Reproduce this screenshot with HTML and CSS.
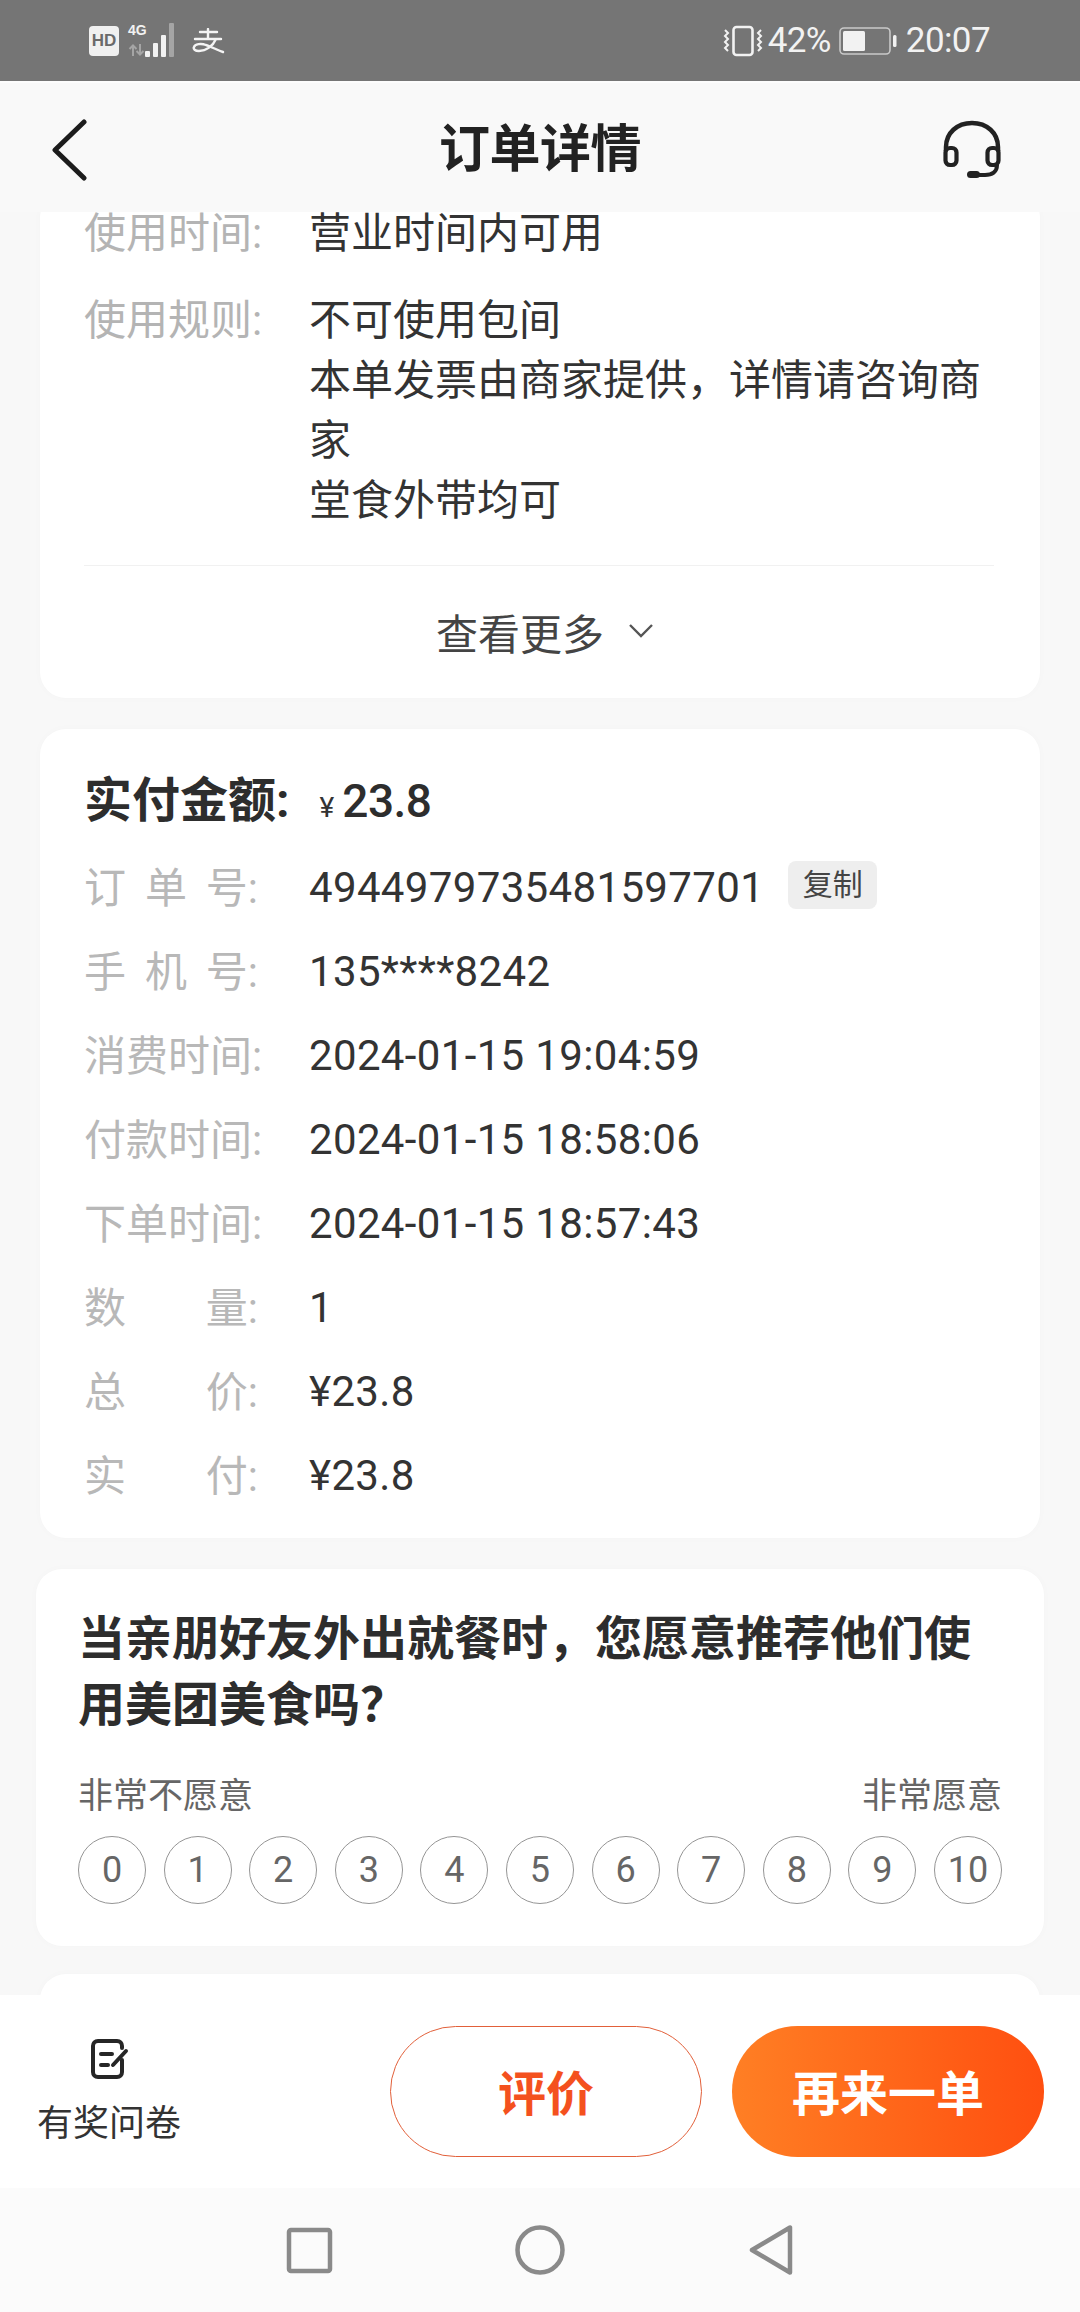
FILE: index.html
```html
<!DOCTYPE html>
<html lang="zh-CN">
<head>
<meta charset="utf-8">
<title>订单详情</title>
<link rel="stylesheet" href="styles.css">
</head>
<body>
<div class="app">
  <div class="status">
    <div class="status-left">
      <span class="hd">HD</span>
      <div class="signal">
        <span class="net">4G</span>
        <svg class="bars" width="52" height="38" viewBox="0 0 52 38">
          <path d="M5 24v10M1.500 27 5 23.500 8.500 27M12 22v10M8.500 29l3.500 3.500 3.500-3.500" fill="none" stroke="#a5a5a5" stroke-width="2"/>
          <rect x="17" y="29" width="5" height="6" rx="1" fill="#f2f2f2"/>
          <rect x="25" y="21" width="5" height="14" rx="1" fill="#f2f2f2"/>
          <rect x="33" y="13" width="5" height="22" rx="1" fill="#f2f2f2"/>
          <rect x="41" y="1" width="5" height="34" rx="1" fill="#a5a5a5"/>
        </svg>
      </div>
      <svg class="ali" width="34" height="26" viewBox="0 0 34 26">
        <path d="M9 4h17M17 1v10M4 11h26M25 11c-3 7-10 12-17 12-4 0-6-2-5-4 1-3 7-4 12-2 6 2 11 5 17 7" fill="none" stroke="#f4f4f4" stroke-width="2.400" stroke-linecap="round"/>
      </svg>
    </div>
    <div class="status-right">
      <svg width="42" height="32" viewBox="0 0 42 32">
        <rect x="11.500" y="2" width="19" height="28" rx="3" fill="none" stroke="#f2f2f2" stroke-width="2.600"/>
        <path d="M3 5l3 3-3 3 3 3-3 3 3 3-3 3 3 3M39 5l-3 3 3 3-3 3 3 3-3 3 3 3-3 3" fill="none" stroke="#f2f2f2" stroke-width="2"/>
      </svg>
      <span class="pct">42%</span>
      <svg class="batt" width="58" height="28" viewBox="0 0 58 28">
        <rect x="1" y="1" width="50" height="26" rx="4" fill="none" stroke="#c9c9c9" stroke-width="1.600"/>
        <rect x="4" y="4" width="22" height="20" rx="1.500" fill="#f2f2f2"/>
        <rect x="54" y="8" width="3.500" height="12" rx="1.500" fill="#f2f2f2"/>
      </svg>
      <span class="time">20:07</span>
    </div>
  </div>

  <header class="nav">
    <svg class="back" width="36" height="62" viewBox="0 0 36 62">
      <path d="M33 3 4 31l29 28" fill="none" stroke="#1c1c1c" stroke-width="5" stroke-linecap="round" stroke-linejoin="round"/>
    </svg>
    <h1 class="nav-title">订单详情</h1>
    <svg class="headset" width="60" height="60" viewBox="0 0 60 60">
      <path d="M4 31V27C4 13 15 3 30 3s26 10 26 24v4" fill="none" stroke="#222" stroke-width="4.500"/>
      <rect x="3.500" y="28" width="11" height="17" rx="4.500" fill="none" stroke="#222" stroke-width="4.200"/>
      <rect x="45.500" y="28" width="11" height="17" rx="4.500" fill="none" stroke="#222" stroke-width="4.200"/>
      <path d="M55 45c0 7-5 10-12 10H28" fill="none" stroke="#222" stroke-width="4"/>
      <rect x="25" y="51" width="13" height="7" rx="3.500" fill="#222"/>
    </svg>
  </header>

  <main class="scroll">
    <section class="card card-rules">
      <div class="info">
        <span class="info-label">使用时间:</span>
        <span class="info-value">营业时间内可用</span>
      </div>
      <div class="info info-last">
        <span class="info-label">使用规则:</span>
        <span class="info-value">不可使用包间<br>本单发票由商家提供，详情请咨询商家<br>堂食外带均可</span>
      </div>
      <div class="more">
        <span>查看更多</span>
        <svg width="26" height="16" viewBox="0 0 26 16"><path d="M2 2l11 11L24 2" fill="none" stroke="#555" stroke-width="2.400"/></svg>
      </div>
    </section>

    <section class="card card-pay">
      <div class="paid">
        <span class="paid-label">实付金额:</span>
        <span class="paid-yen">¥</span>
        <span class="paid-num">23.8</span>
      </div>
      <div class="row">
        <span class="label"><span>订</span><span>单</span><span>号:</span></span>
        <span class="val">4944979735481597701</span>
        <span class="copy">复制</span>
      </div>
      <div class="row">
        <span class="label"><span>手</span><span>机</span><span>号:</span></span>
        <span class="val">135****8242</span>
      </div>
      <div class="row">
        <span class="label"><span>消费时间:</span></span>
        <span class="val">2024-01-15 19:04:59</span>
      </div>
      <div class="row">
        <span class="label"><span>付款时间:</span></span>
        <span class="val">2024-01-15 18:58:06</span>
      </div>
      <div class="row">
        <span class="label"><span>下单时间:</span></span>
        <span class="val">2024-01-15 18:57:43</span>
      </div>
      <div class="row">
        <span class="label"><span>数</span><span>量:</span></span>
        <span class="val">1</span>
      </div>
      <div class="row">
        <span class="label"><span>总</span><span>价:</span></span>
        <span class="val">¥23.8</span>
      </div>
      <div class="row">
        <span class="label"><span>实</span><span>付:</span></span>
        <span class="val">¥23.8</span>
      </div>
    </section>

    <section class="card card-nps">
      <h2 class="nps-title">当亲朋好友外出就餐时，您愿意推荐他们使用美团美食吗？</h2>
      <div class="nps-ends"><span>非常不愿意</span><span>非常愿意</span></div>
      <div class="nps-scale">
        <span class="dot">0</span><span class="dot">1</span><span class="dot">2</span><span class="dot">3</span><span class="dot">4</span><span class="dot">5</span><span class="dot">6</span><span class="dot">7</span><span class="dot">8</span><span class="dot">9</span><span class="dot">10</span>
      </div>
    </section>

    <section class="card card-next"></section>
  </main>

  <footer class="bar">
    <div class="survey">
      <svg width="40" height="42" viewBox="0 0 40 42">
        <path d="M33 10V8c0-3-2-5-5-5H9C6 3 4 5 4 8v26c0 3 2 5 5 5h19c3 0 5-2 5-5V22" fill="none" stroke="#262626" stroke-width="4" stroke-linecap="round"/>
        <path d="M12 16h11M12 27h7M24 27 37 13" fill="none" stroke="#262626" stroke-width="4" stroke-linecap="round"/>
      </svg>
      <span class="survey-text">有奖问卷</span>
    </div>
    <div class="actions">
      <button class="btn btn-line">评价</button>
      <button class="btn btn-fill">再来一单</button>
    </div>
  </footer>

  <div class="sysnav">
    <svg width="50" height="52" viewBox="0 0 50 52"><rect x="5" y="6" width="41" height="41" rx="2" fill="none" stroke="#8a8a8a" stroke-width="4.500"/></svg>
    <svg width="50" height="52" viewBox="0 0 50 52"><circle cx="25" cy="26" r="22.500" fill="none" stroke="#8a8a8a" stroke-width="4.500"/></svg>
    <svg width="50" height="52" viewBox="0 0 50 52"><path d="M44 3.500V48.500L6 26Z" fill="none" stroke="#8a8a8a" stroke-width="4.500" stroke-linejoin="round"/></svg>
  </div>
</div>
</body>
</html>
```
FILE: styles.css
```css
* { box-sizing: border-box; }
html, body { margin: 0; padding: 0; }
body {
  font-family: Roboto, "Noto Sans CJK SC", sans-serif;
  background: #f8f8f8;
  color: #333;
}
.app {
  width: 1080px;
  height: 2312px;
  display: flex;
  flex-direction: column;
  overflow: hidden;
}

/* status bar */
.status {
  height: 81px;
  flex: none;
  background: #757575;
  color: #f2f2f2;
  display: flex;
  justify-content: space-between;
  align-items: center;
  padding: 0 90px 0 89px;
}
.status-left, .status-right { display: flex; align-items: center; }
.hd {
  width: 30px;
  height: 30px;
  border-radius: 4px;
  background: #f0f0f0;
  color: #6a6a6a;
  font: 700 17px/30px "Liberation Sans", sans-serif;
  text-align: center;
}
.signal { position: relative; width: 52px; height: 38px; margin-left: 9px; }
.net {
  position: absolute;
  left: 0;
  top: 0;
  font: 700 14px/16px "Liberation Sans", sans-serif;
  color: #f2f2f2;
}
.bars { display: block; }
.ali { margin-left: 11px; }
.status-right { gap: 9px; }
.pct, .time { font-size: 35px; font-weight: 400; line-height: 40px; letter-spacing: -.6px; }
.pct { margin-left: -5px; }
.time { margin-left: 0; }
.batt { margin-left: -1px; }

/* header */
.nav {
  height: 131px;
  flex: none;
  background: #f9f9f9;
  display: grid;
  grid-template-columns: 1fr auto 1fr;
  align-items: center;
  padding: 4px 51px 0;
  border-top: 2px solid #fdfdfd;
}
.headset { justify-self: end; margin-right: 27px; }
.nav-title {
  margin: 0;
  font-size: 51px;
  line-height: 60px;
  font-weight: 700;
  color: #222;
  letter-spacing: -.5px;
}

/* scrolling content */
.scroll {
  flex: 1;
  min-height: 0;
  overflow: hidden;
  display: flex;
  flex-direction: column;
  gap: 31px;
}
.card {
  flex: none;
  background: #fff;
  border-radius: 26px;
  margin: 0 40px;
  box-shadow: 0 0 10px rgba(0, 0, 0, .02);
}

.card-rules { margin-top: -20px; padding: 12px 46px 0 44px; height: 506px; }
.info { display: flex; font-size: 42px; line-height: 60px; margin-bottom: 27px; }
.info-last { margin-bottom: 0; padding-bottom: 34px; border-bottom: 1px solid #f1f1f1; }
.info-label { width: 225px; flex: none; color: #b4b4b4; }
.info-value { flex: 1; color: #333; }
.more {
  height: 132px;
  display: flex;
  align-items: center;
  justify-content: center;
  gap: 24px;
  padding: 0 0 2px 12px;
  font-size: 42px;
  color: #444;
}

.card-pay { padding: 42px 44px 21px; }
.paid { display: flex; align-items: baseline; height: 60px; margin-bottom: 14px; line-height: 60px; }
.paid-label { font-size: 48px; font-weight: 700; color: #2d2d2d; flex: none; white-space: nowrap; }
.paid-yen { font-size: 28px; color: #333; margin: 0 8px 0 30px; }
.paid-num { font-size: 46px; font-weight: 500; color: #2d2d2d; letter-spacing: -.5px; }
.row { height: 84px; display: flex; align-items: center; font-size: 42px; }
.label {
  width: 174px;
  flex: none;
  margin-right: 51px;
  padding-bottom: 6px;
  display: flex;
  justify-content: space-between;
  color: #b8b8b8;
  white-space: nowrap;
}
.val { color: #333; letter-spacing: .35px; }
.copy {
  width: 89px;
  height: 48px;
  margin-left: 24px;
  margin-top: -4px;
  border-radius: 8px;
  background: #eee;
  color: #444;
  font-size: 30px;
  line-height: 48px;
  text-align: center;
}

.card-nps { margin: 0 36px; padding: 37px 42px 42px; }
.nps-title {
  margin: 0 0 37px;
  font-size: 47px;
  line-height: 66px;
  font-weight: 700;
  color: #2d2d2d;
}
.nps-ends {
  display: flex;
  justify-content: space-between;
  font-size: 35px;
  line-height: 44px;
  color: #666;
  margin-bottom: 17px;
}
.nps-scale { display: flex; justify-content: space-between; }
.dot {
  width: 68px;
  height: 68px;
  border: 1.500px solid #959595;
  border-radius: 50%;
  display: flex;
  align-items: center;
  justify-content: center;
  font-size: 36px;
  color: #666;
}
.card-next { height: 200px; margin-top: -3px; }

/* action bar */
.bar {
  height: 193px;
  flex: none;
  background: #fff;
  display: flex;
  justify-content: space-between;
  padding: 31px 36px 0 37px;
  position: relative;
}
.survey {
  width: 144px;
  display: flex;
  flex-direction: column;
  align-items: center;
  padding-top: 12px;
}
.survey-text { margin-top: 20px; font-size: 36px; line-height: 48px; color: #333; white-space: nowrap; }
.actions { display: flex; gap: 30px; }
.btn {
  width: 312px;
  height: 131px;
  border-radius: 66px;
  font-family: inherit;
  font-size: 48px;
  font-weight: 700;
  padding: 0 0 4px;
}
.btn-line { background: #fff; border: 1.500px solid #e2603a; color: #f4511e; }
.btn-fill { border: 0; color: #fff; background: linear-gradient(90deg, #ff7f24, #ff4f10); }

/* system nav */
.sysnav {
  height: 124px;
  flex: none;
  background: #fbfbfb;
  display: flex;
  justify-content: center;
  align-items: center;
  gap: 181px;
}
```
